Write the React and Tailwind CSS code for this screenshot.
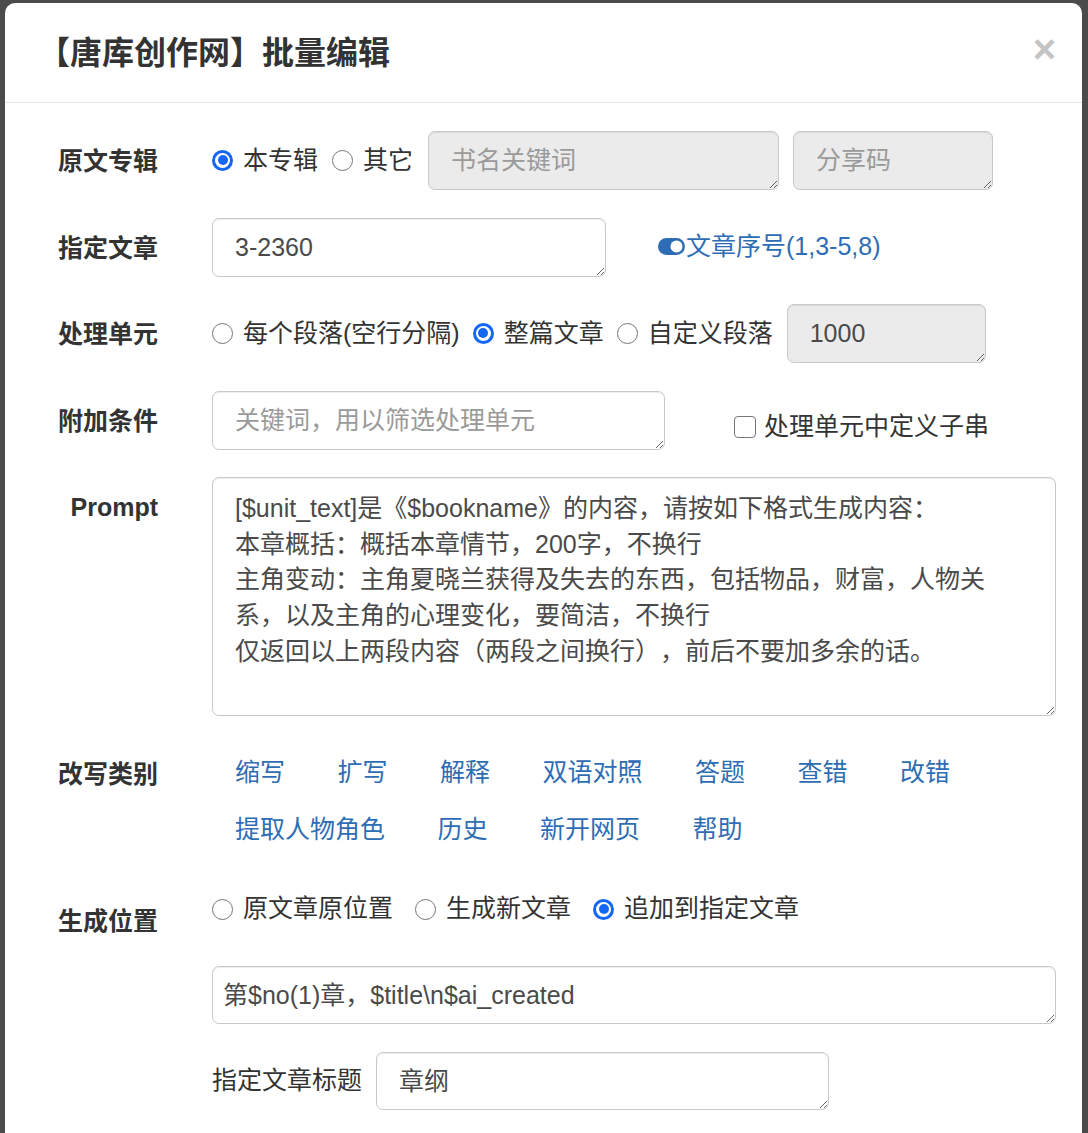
import React from 'react';

const FONT = "font-['Liberation_Sans','Noto_Sans_CJK_SC',sans-serif]";

// native-looking radio, drawn so it can be sized like the screenshot
function Radio({ checked, label, className = '' }) {
  return (
    <label className={`flex items-center gap-[10px] ${className}`}>
      {checked ? (
        <span className="w-[21px] h-[21px] rounded-full border-[3px] border-[#1467f5] bg-white flex items-center justify-center shrink-0">
          <span className="w-[10px] h-[10px] rounded-full bg-[#1467f5]" />
        </span>
      ) : (
        <span className="w-[21px] h-[21px] rounded-full border-[1.5px] border-[#767676] bg-white shrink-0" />
      )}
      <span className="whitespace-nowrap">{label}</span>
    </label>
  );
}

function FieldLabel({ children, className = 'pt-[13px]' }) {
  return (
    <div className={`w-[127px] shrink-0 text-right font-bold text-[#333] ${className}`}>
      {children}
    </div>
  );
}

const box =
  'block rounded-[7px] border border-[#c9c9c9] shadow-[inset_0_1px_1px_rgba(0,0,0,0.075)] text-[25px] leading-[35.7px] text-[#4a4a4a] placeholder:text-[#9a9a9a] outline-none overflow-hidden';

function ToggleOn() {
  return (
    <svg width="27" height="17" viewBox="0 0 27 17" className="shrink-0">
      <rect x="0" y="0" width="27" height="17" rx="8.5" fill="#2e6db4" />
      <circle cx="18.5" cy="8.5" r="6" fill="#fff" />
    </svg>
  );
}

const rewriteLinks = ['缩写', '扩写', '解释', '双语对照', '答题', '查错', '改错', '提取人物角色', '历史', '新开网页', '帮助'];

const promptText =
  '[$unit_text]是《$bookname》的内容，请按如下格式生成内容：\n本章概括：概括本章情节，200字，不换行\n主角变动：主角夏晓兰获得及失去的东西，包括物品，财富，人物关系，以及主角的心理变化，要简洁，不换行\n仅返回以上两段内容（两段之间换行），前后不要加多余的话。';

export default function App() {
  return (
    <div className={`h-[1133px] overflow-hidden bg-[#4b4b4b] pt-[3px] pl-[5px] [text-spacing-trim:space-all] ${FONT}`}>
      <div className="w-[1077px] min-h-[1200px] bg-white rounded-t-[10px]">
        {/* header */}
        <div className="h-[100px] border-b border-[#e5e5e5] flex items-center justify-between pl-[33px] pr-[26px]">
          <h4 className="text-[32px] font-bold text-[#333] leading-none">【唐库创作网】批量编辑</h4>
          <button className="text-[40px] font-bold leading-none text-[#c4c4c4] -mt-[8px]">×</button>
        </div>

        {/* body */}
        <div className="pl-[26px] pr-[26px] pt-[28px] text-[25px] leading-[35.7px] text-[#333]">
          {/* 原文专辑 */}
          <div className="flex items-start mb-[27.5px]">
            <FieldLabel>原文专辑</FieldLabel>
            <div className="ml-[54px] flex items-center h-[59px]">
              <Radio checked label="本专辑" className="mr-[14px]" />
              <Radio label="其它" />
              <textarea
                className={`${box} ml-[15px] w-[351px] h-[59px] bg-[#ebebeb] pt-[11px] pl-[22px] pr-[12px]`}
                placeholder="书名关键词"
              />
              <textarea
                className={`${box} ml-[14px] w-[200px] h-[59px] bg-[#ebebeb] pt-[11px] pl-[22px] pr-[12px]`}
                placeholder="分享码"
              />
            </div>
          </div>

          {/* 指定文章 */}
          <div className="flex items-start mb-[27.5px]">
            <FieldLabel>指定文章</FieldLabel>
            <div className="ml-[54px] flex items-center h-[59px]">
              <textarea
                className={`${box} w-[394px] h-[59px] bg-white pt-[11px] pl-[22px] pr-[12px]`}
                defaultValue="3-2360"
              />
              <a className="ml-[52px] flex items-center gap-[1px] text-[#2e6db4] whitespace-nowrap cursor-pointer">
                <ToggleOn />
                <span>文章序号(1,3-5,8)</span>
              </a>
            </div>
          </div>

          {/* 处理单元 */}
          <div className="flex items-start mb-[27.5px]">
            <FieldLabel>处理单元</FieldLabel>
            <div className="ml-[54px] flex items-center h-[59px]">
              <Radio label="每个段落(空行分隔)" className="mr-[13px]" />
              <Radio checked label="整篇文章" className="mr-[13px]" />
              <Radio label="自定义段落" />
              <textarea
                className={`${box} ml-[14px] w-[199px] h-[59px] bg-[#ebebeb] pt-[11px] pl-[22px] pr-[12px]`}
                defaultValue="1000"
              />
            </div>
          </div>

          {/* 附加条件 */}
          <div className="flex items-start mb-[27.5px]">
            <FieldLabel>附加条件</FieldLabel>
            <div className="ml-[54px] flex items-center h-[59px]">
              <textarea
                className={`${box} w-[453px] h-[59px] bg-white pt-[11px] pl-[22px] pr-[12px]`}
                placeholder="关键词，用以筛选处理单元"
              />
              <label className="ml-[69px] mt-[14px] flex items-center gap-[8px] whitespace-nowrap">
                <span className="w-[22px] h-[22px] rounded-[4px] border-[1.5px] border-[#767676] bg-white shrink-0" />
                <span>处理单元中定义子串</span>
              </label>
            </div>
          </div>

          {/* Prompt */}
          <div className="flex items-start mb-[27.5px]">
            <FieldLabel>Prompt</FieldLabel>
            <div className="ml-[54px] flex-1">
              <textarea
                className={`${box} w-full h-[239px] bg-white pt-[13px] pl-[22px] pr-[55px]`}
                defaultValue={promptText}
              />
            </div>
          </div>

          {/* 改写类别 */}
          <div className="flex items-start mb-[27.5px]">
            <FieldLabel>改写类别</FieldLabel>
            <div className="ml-[54px] flex-1 flex flex-wrap gap-x-[6.5px]">
              {rewriteLinks.map((t) => (
                <a key={t} className="px-[23px] py-[11px] text-[#2e6db4] whitespace-nowrap cursor-pointer">
                  {t}
                </a>
              ))}
            </div>
          </div>

          {/* 生成位置 */}
          <div className="flex items-start">
            <FieldLabel className="pt-[17.5px]">生成位置</FieldLabel>
            <div className="ml-[54px] flex-1">
              <div className="flex items-center pt-[5px]">
                <Radio label="原文章原位置" className="mr-[22px]" />
                <Radio label="生成新文章" className="mr-[22px]" />
                <Radio checked label="追加到指定文章" />
              </div>
              <textarea
                className={`${box} mt-[39px] w-full h-[58px] bg-white pt-[11px] pl-[10px] pr-[12px]`}
                defaultValue="第$no(1)章，$title\n$ai_created"
              />
              <div className="mt-[28px] flex items-center">
                <span className="whitespace-nowrap">指定文章标题</span>
                <textarea
                  className={`${box} ml-[14px] w-[453px] h-[58px] bg-white pt-[11px] pl-[22px] pr-[12px]`}
                  defaultValue="章纲"
                />
              </div>
            </div>
          </div>
        </div>
      </div>
    </div>
  );
}
